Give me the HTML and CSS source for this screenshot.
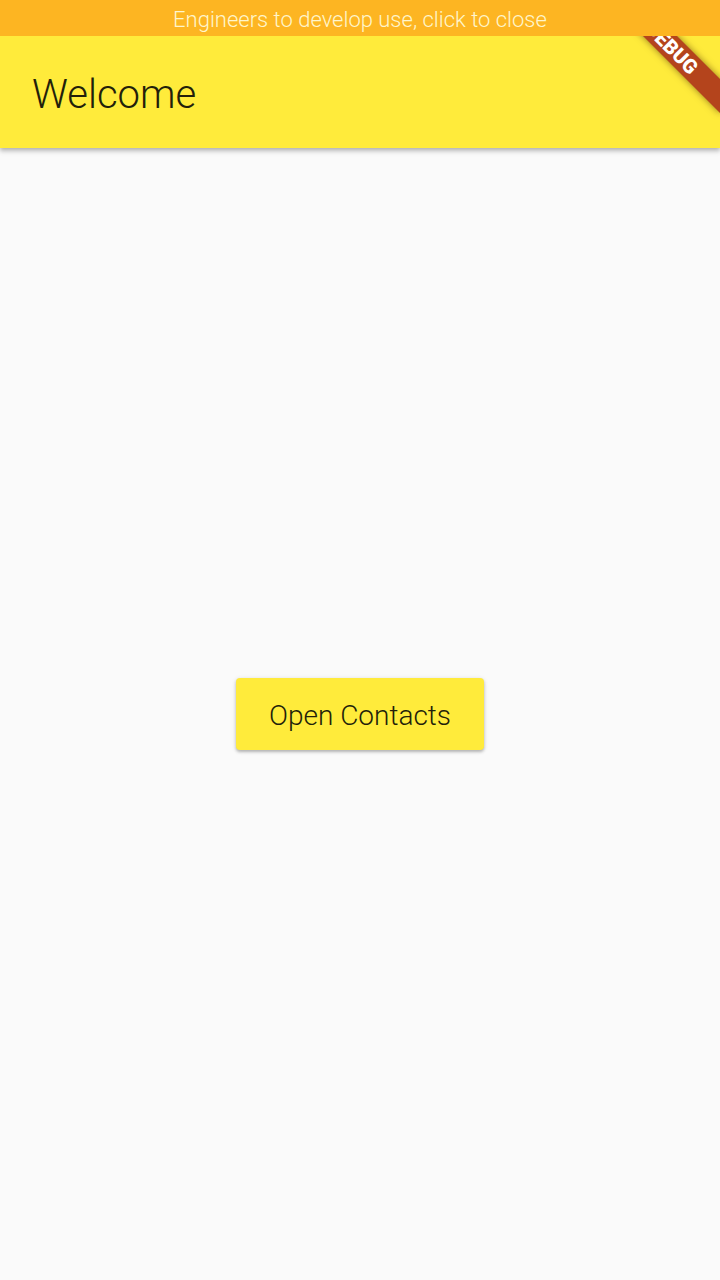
FILE: index.html
```html
<!DOCTYPE html>
<html>
<head>
<meta charset="utf-8">
<link rel="stylesheet" href="styles.css">
</head>
<body>
<div class="screen">
  <div class="notice">Engineers to develop use, click to close</div>
  <header class="appbar">
    <h1 class="title">Welcome</h1>
  </header>
  <main class="content">
    <button class="raised">Open Contacts</button>
  </main>
  <div class="debug-banner"><span>DEBUG</span></div>
</div>
</body>
</html>
```
FILE: styles.css
```css
html, body {
  margin: 0;
  padding: 0;
}
body {
  font-family: Roboto, "Noto Sans", sans-serif;
  background: #fafafa;
}
.screen {
  position: relative;
  width: 720px;
  height: 1280px;
  overflow: hidden;
  display: flex;
  flex-direction: column;
  background: #fafafa;
}
.notice {
  position: relative;
  z-index: 3;
  height: 36px;
  flex: none;
  box-sizing: border-box;
  padding-top: 3px;
  background: #fdb522;
  color: #fff5cc;
  font-size: 22px;
  font-weight: 300;
  line-height: 33px;
  text-align: center;
}
.appbar {
  position: relative;
  z-index: 1;
  height: 112px;
  flex: none;
  box-sizing: border-box;
  padding: 4px 32px 0;
  background: #ffeb3b;
  box-shadow: 0 2px 4px rgba(0,0,0,0.2), 0 4px 5px rgba(0,0,0,0.12);
  display: flex;
  align-items: center;
}
.title {
  margin: 0;
  font-weight: 300;
  font-size: 40px;
  color: #231f0a;
}
.content {
  flex: 1;
  display: flex;
  align-items: center;
  justify-content: center;
}
.raised {
  width: 248px;
  height: 72px;
  border: none;
  border-radius: 4px;
  background: #ffeb3b;
  color: #231f0a;
  font-family: Roboto, "Noto Sans", sans-serif;
  font-size: 28px;
  font-weight: 300;
  box-shadow: 0 2px 3px rgba(0,0,0,0.22), 0 1px 5px rgba(0,0,0,0.12);
  padding: 2px 0 0;
}
.debug-banner {
  position: absolute;
  z-index: 2;
  left: 592px;
  top: 36px;
  width: 160px;
  height: 24px;
  transform: rotate(45deg);
  background: #b4441c;
  box-shadow: 0 0 7px rgba(60,30,0,0.55);
  display: flex;
  align-items: center;
  justify-content: center;
}
.debug-banner span {
  color: #fff;
  font-weight: 900;
  font-size: 20px;
  line-height: 1;
  font-family: Roboto, sans-serif;
}
```
